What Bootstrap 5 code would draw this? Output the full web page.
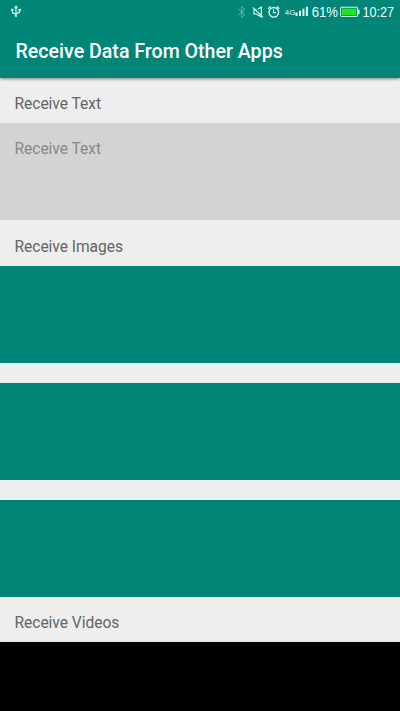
<!DOCTYPE html>
<html lang="en">
<head>
<meta charset="utf-8">
<meta name="viewport" content="width=device-width, initial-scale=1">
<title>Receive Data From Other Apps</title>
<link href="https://cdn.jsdelivr.net/npm/bootstrap@5.3.0/dist/css/bootstrap.min.css" rel="stylesheet">
<style>
body{font-family:Roboto,"Liberation Sans",sans-serif;background:#000;height:711px;overflow:hidden}
.app-top{background:#018577;height:78px;box-shadow:0 1px 3px rgba(0,0,0,.45);z-index:1}
.status-bar{height:24px;padding:0 0 0 10px}
.status-bar svg{display:block;flex:none}
.app-title{font-size:19.6px;font-weight:500;line-height:56px;color:#fff;padding-left:15.5px;margin:0;white-space:nowrap}
.page-body{background:#eee;height:564px}
.section-label{height:45px;padding:14px 0 0 14.5px;font-size:15.6px;letter-spacing:-.05px;line-height:24px;color:#646464}
.after-box{height:46px;padding-top:15px}
.text-box{height:97px;background:#d3d3d3;color:#888;font-size:15.6px;letter-spacing:-.05px;line-height:24px;padding:14px 0 0 14.5px}
.image-box{height:97px;background:#018577}
.image-stack{gap:20px}
</style>
<script src="https://cdn.jsdelivr.net/npm/bootstrap@5.3.0/dist/js/bootstrap.bundle.min.js"></script>
</head>
<body>
<header class="app-top position-relative">
  <div class="status-bar d-flex align-items-center justify-content-between">
    <svg width="12" height="24" viewBox="0 0 12 24" fill="none" stroke="#dcfff7" stroke-width="1.2"><path d="M6 7v9M2.3 9.5v2.2q0 1.8 3.7 2.3M9.7 9.5v1.7q0 1.8-3.7 2.3"/><path d="M6 5.5 4.5 8h3zM1.4 9h1.9v1.6H1.4zM8.7 9h1.9v1.6H8.7zM5.2 15.4h1.6v1.2H5.2z" fill="#dcfff7" stroke-width=".5"/></svg>
    <div class="d-flex align-items-center">
      <svg width="74" height="24" viewBox="236 0 74 24" fill="none" stroke="#dcfff7">
        <path d="M238.5 9 245 14.7 241.8 17.5V6.5L245 9.3 238.5 15" stroke="#63b8aa"/>
        <path d="M256.5 9.5H254V14h2.3l5 3V7l-3.3 2M252.7 7.3l10.2 9.7" stroke-width="1.1"/>
        <circle cx="273.8" cy="12.3" r="4.8" stroke-width="1.3"/>
        <path d="M273.5 9.3v3.3h2.5M268.2 8.7l2.5-2.2M279.4 8.7l-2.5-2.2" stroke-width="1.2"/>
        <text x="284.8" y="15" font-family="Liberation Sans,sans-serif" font-size="8" fill="#dcfff7" stroke="none" textLength="10.5" lengthAdjust="spacingAndGlyphs">4G</text>
        <path d="M295.5 12.5h2V16h-2zM299 10.7h2V16h-2zM302.4 8.8h2V16h-2zM305.9 6.8h2V16h-2z" fill="#dcfff7" stroke="none"/>
      </svg>
      <svg width="90" height="24" viewBox="310 0 90 24">
        <g font-family="Liberation Sans,sans-serif" font-size="14" fill="#f0fffc"><text x="311.7" y="16.8" textLength="26.3" lengthAdjust="spacingAndGlyphs">61%</text><text x="362.5" y="16.8" textLength="31.5" lengthAdjust="spacingAndGlyphs">10:27</text></g>
        <rect x="340.6" y="7.2" width="17" height="9.2" rx=".7" fill="none" stroke="#dcfff7"/>
        <path d="M342 8.6h14.2V15H342z" fill="#20e322"/><path d="M358 9.7h1.6v4.2H358z" fill="#dcfff7"/>
      </svg>
    </div>
  </div>
  <h1 class="app-title">Receive Data From Other Apps</h1>
</header>
<main class="page-body">
  <div class="section-label">Receive Text</div>
  <div class="text-box">Receive Text</div>
  <div class="section-label after-box">Receive Images</div>
  <div class="image-stack d-flex flex-column">
    <div class="image-box"></div>
    <div class="image-box"></div>
    <div class="image-box"></div>
  </div>
  <div class="section-label">Receive Videos</div>
</main>
</body>
</html>
